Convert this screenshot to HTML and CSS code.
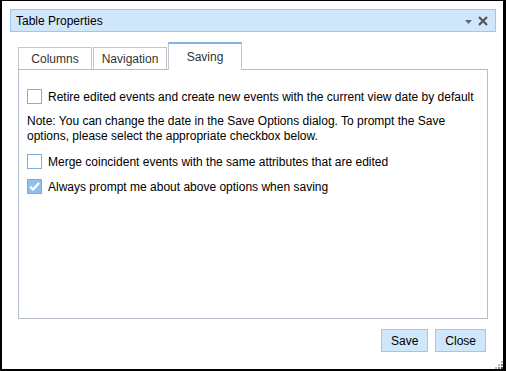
FILE: index.html
```html
<!DOCTYPE html>
<html lang="en">
  <head>
    <meta charset="UTF-8" />
    <title>Table Properties</title>
    <link rel="stylesheet" href="styles.css">
  </head>
  <body>
    <div class="dialog">
      <header class="titlebar">
        <span class="title">Table Properties</span>
        <div class="title-tools">
          <svg class="tool-menu" width="7" height="4" viewBox="0 0 7 4">
            <path d="M0 0 H7 L3.5 4 Z" fill="#666" />
          </svg>
          <svg class="tool-close" width="10" height="10" viewBox="0 0 10 10">
            <path d="M1 1 L9 9 M9 1 L1 9" stroke="#555" stroke-width="2.2" />
          </svg>
        </div>
      </header>

      <section class="content">
        <!-- tabs -->
        <div class="tabs">
          <div class="tab">Columns</div>
          <div class="tab">Navigation</div>
          <div class="tab active">Saving</div>
        </div>

        <div class="panel">
          <label class="option">
            <span class="check"></span>
            Retire edited events and create new events with the current view date by default
          </label>
          <p class="note">
            Note: You can change the date in the Save Options dialog. To prompt the Save
            options, please select the appropriate checkbox below.
          </p>
          <label class="option">
            <span class="check"></span>
            Merge coincident events with the same attributes that are edited
          </label>
          <label class="option">
            <span class="check checked">
              <svg width="11" height="9" viewBox="0 0 11 9">
                <path d="M1 4.5 L4 7.5 L10 1" fill="none" stroke="#fff" stroke-width="2.2" />
              </svg>
            </span>
            Always prompt me about above options when saving
          </label>
        </div>

        <div class="actions">
          <button>Save</button>
          <button>Close</button>
        </div>
      </section>

      <svg class="grip" width="8" height="8" viewBox="0 0 8 8">
        <rect x="6" y="0" width="2" height="2" fill="#bbb" />
        <rect x="3" y="3" width="2" height="2" fill="#bbb" />
        <rect x="6" y="3" width="2" height="2" fill="#888" />
        <rect x="0" y="6" width="2" height="2" fill="#bbb" />
        <rect x="3" y="6" width="2" height="2" fill="#888" />
        <rect x="6" y="6" width="2" height="2" fill="#444" />
      </svg>
    </div>
  </body>
</html>
```

FILE: styles.css
```css
* {
  margin: 0;
  padding: 0;
  box-sizing: border-box;
  font-family: "Liberation Sans", Arial, sans-serif;
}

body {
  background: #fff;
}

.dialog {
  position: relative;
  width: 506px;
  height: 371px;
  border-style: solid;
  border-color: #000;
  border-width: 1px 3px 2px 2px;
  padding: 8px 7px 17px 8px;
  display: flex;
  flex-direction: column;
  background: #fff;
}

.titlebar {
  height: 23px;
  background: #d0e6fa;
  border: 1px solid #99c9f1;
  display: flex;
  align-items: center;
  justify-content: space-between;
  padding: 0 7px 0 5px;
}

.title {
  font-size: 12px;
  color: #000;
}

.title-tools {
  display: flex;
  align-items: center;
  gap: 6px;
}

.tool-menu {
  margin-top: 2px;
}

.content {
  flex: 1;
  display: flex;
  flex-direction: column;
  padding: 10px 8px 0 8px;
}

.tabs {
  display: flex;
  align-items: flex-end;
  gap: 1px;
}

.tab {
  width: 74px;
  height: 22px;
  border: 1px solid #c3c6cc;
  border-bottom: none;
  font-size: 12px;
  color: #333;
  display: flex;
  align-items: center;
  justify-content: center;
  padding-top: 1px;
  background: #fff;
}

.tab.active {
  position: relative;
  z-index: 1;
  height: 28px;
  margin-bottom: -1px;
  border-top: 2px solid #7fb3e6;
  padding-top: 0;
  padding-bottom: 1px;
}

.panel {
  flex: 1;
  border: 1px solid #b5bdcb;
  padding: 19px 8px 0 8px;
  display: flex;
  flex-direction: column;
  gap: 10px;
}

.option {
  display: flex;
  align-items: center;
  gap: 6px;
  font-size: 12px;
  color: #000;
  height: 15px;
}

.check {
  width: 15px;
  height: 15px;
  flex-shrink: 0;
  border: 1px solid #80afdd;
  background: #fff;
  display: flex;
  align-items: center;
  justify-content: center;
}

.check.checked {
  background: #8fbfea;
  border-color: #7aaade;
}

.note {
  font-size: 12px;
  line-height: 15px;
  color: #000;
}

.actions {
  display: flex;
  justify-content: flex-end;
  gap: 7px;
  margin-top: 10px;
  margin-right: 2px;
}

.actions button {
  height: 23px;
  padding: 0 9px;
  font-size: 12px;
  color: #000;
  background: #d0e6fa;
  border: 1px solid #99c9f1;
}

.grip {
  position: absolute;
  right: 0;
  bottom: 0;
}
```
